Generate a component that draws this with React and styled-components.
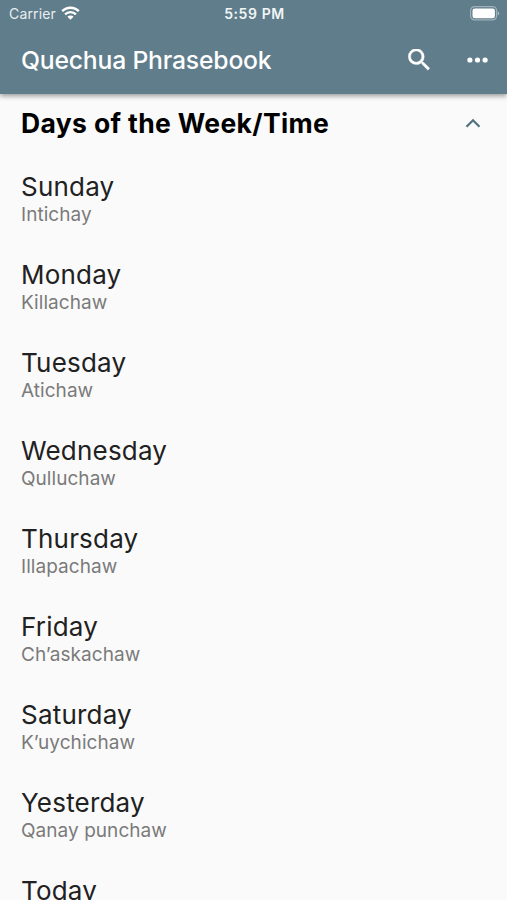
import React from "react";
import styled, { createGlobalStyle } from "styled-components";

const GlobalStyle = createGlobalStyle`
  body {
    margin: 0;
    overflow: hidden;
    background: #fafafa;
    font-family: Inter, "Liberation Sans", sans-serif;
  }
`;

const Screen = styled.div`
  display: flex;
  flex-direction: column;
  width: 507px;
  height: 900px;
  overflow: hidden;
  background: #fafafa;
`;

const Header = styled.header`
  flex: none;
  height: 94px;
  background: #607d8b;
  color: #ffffff;
  box-shadow: 0 2px 5px rgba(0, 0, 0, 0.4);
`;

const StatusBar = styled.div`
  display: grid;
  grid-template-columns: 1fr auto 1fr;
  align-items: center;
  height: 27px;
  padding: 0 7px 0 9px;
  font-size: 14px;
`;

const Carrier = styled.div`
  display: flex;
  align-items: center;
  gap: 5px;
  letter-spacing: 0.15px;
  color: #e9eef0;
`;

const WifiIcon = styled.svg`
  margin-bottom: 1px;
`;

const Time = styled.div`
  font-weight: 600;
  letter-spacing: 0.6px;
  color: #f1f5f6;
`;

const BatteryIcon = styled.svg`
  justify-self: end;
`;

const TitleBar = styled.div`
  display: flex;
  align-items: center;
  height: 66px;
  padding: 0 19px 0 21px;
`;

const Title = styled.h1`
  flex: 1;
  margin: 0;
  font-size: 24.7px;
  font-weight: 500;
  letter-spacing: -0.18px;
`;

const Actions = styled.div`
  display: flex;
  align-items: center;
  gap: 37.5px;
`;

const Section = styled.div`
  display: flex;
  flex: none;
  align-items: center;
  justify-content: space-between;
  box-sizing: border-box;
  height: 60px;
  padding: 0 26px 2px 21px;
`;

const SectionTitle = styled.h2`
  margin: 0;
  font-size: 26.5px;
  font-weight: 700;
  letter-spacing: 0.35px;
  color: #000000;
`;

const Phrase = styled.div`
  flex: none;
  box-sizing: border-box;
  height: 88px;
  padding: 17px 21px 0;
`;

const English = styled.div`
  margin-bottom: 1px;
  font-size: 26px;
  line-height: 32px;
  letter-spacing: 0.2px;
  color: #212121;
`;

const Quechua = styled.div`
  font-size: 19px;
  line-height: 22px;
  letter-spacing: 0.05px;
  color: #7a7a7a;
`;

const phrases = [
  ["Sunday", "Intichay"],
  ["Monday", "Killachaw"],
  ["Tuesday", "Atichaw"],
  ["Wednesday", "Qulluchaw"],
  ["Thursday", "Illapachaw"],
  ["Friday", "Ch’askachaw"],
  ["Saturday", "K’uychichaw"],
  ["Yesterday", "Qanay punchaw"],
  ["Today"],
];

const App = () => {
  return (
    <Screen>
      <GlobalStyle />
      <Header>
        <StatusBar>
          <Carrier>
            Carrier
            <WifiIcon width="19" height="14" viewBox="0 0 19 14" fill="none" stroke="#fff" strokeWidth="2.4">
              <path d="M1.2 5.2a11.7 11.7 0 0 1 16.6 0M4.1 8.4a7.6 7.6 0 0 1 10.8 0" />
              <path d="M9.5 13.8 6.4 10.7a4.4 4.4 0 0 1 6.2 0Z" fill="#fff" stroke="none" />
            </WifiIcon>
          </Carrier>
          <Time>5:59 PM</Time>
          <BatteryIcon width="30" height="15" viewBox="0 0 30 15">
            <rect x="0.6" y="0.6" width="26" height="13.3" rx="4" fill="none" stroke="#fff" strokeOpacity="0.4" strokeWidth="1.2" />
            <rect x="2.5" y="2.4" width="22.4" height="9.8" rx="2.2" fill="#fff" />
            <path d="M27.8 5.2v4.4c1.9-.8 1.9-3.6 0-4.4Z" fill="#fff" fillOpacity="0.5" />
          </BatteryIcon>
        </StatusBar>
        <TitleBar>
          <Title>Quechua Phrasebook</Title>
          <Actions>
            <svg width="22" height="22" viewBox="2.8 3.3 17.9 17.9" fill="#fff" stroke="#fff" strokeWidth="0.3">
              <path d="M15.5 14h-.79l-.28-.27A6.471 6.471 0 0 0 16 9.5 6.5 6.5 0 1 0 9.5 16c1.61 0 3.09-.59 4.23-1.57l.27.28v.79l5 4.99L20.49 19l-4.99-5zm-6 0C7.01 14 5 11.99 5 9.5S7.01 5 9.5 5 14 7.01 14 9.5 11.99 14 9.5 14z" />
            </svg>
            <svg width="21" height="6" viewBox="0 0 21 6" fill="#fff">
              <circle cx="2.9" cy="3" r="2.6" />
              <circle cx="10.5" cy="3" r="2.6" />
              <circle cx="18.1" cy="3" r="2.6" />
            </svg>
          </Actions>
        </TitleBar>
      </Header>
      <Section>
        <SectionTitle>Days of the Week/Time</SectionTitle>
        <svg width="16" height="10" viewBox="0 0 16 10" fill="none" stroke="#527580" strokeWidth="2.3">
          <path d="m1.5 8.8 6.5-6.5 6.5 6.5" />
        </svg>
      </Section>
      {phrases.map(([english, quechua]) => (
        <Phrase key={english}>
          <English>{english}</English>
          {quechua && <Quechua>{quechua}</Quechua>}
        </Phrase>
      ))}
    </Screen>
  );
};

export default App;
